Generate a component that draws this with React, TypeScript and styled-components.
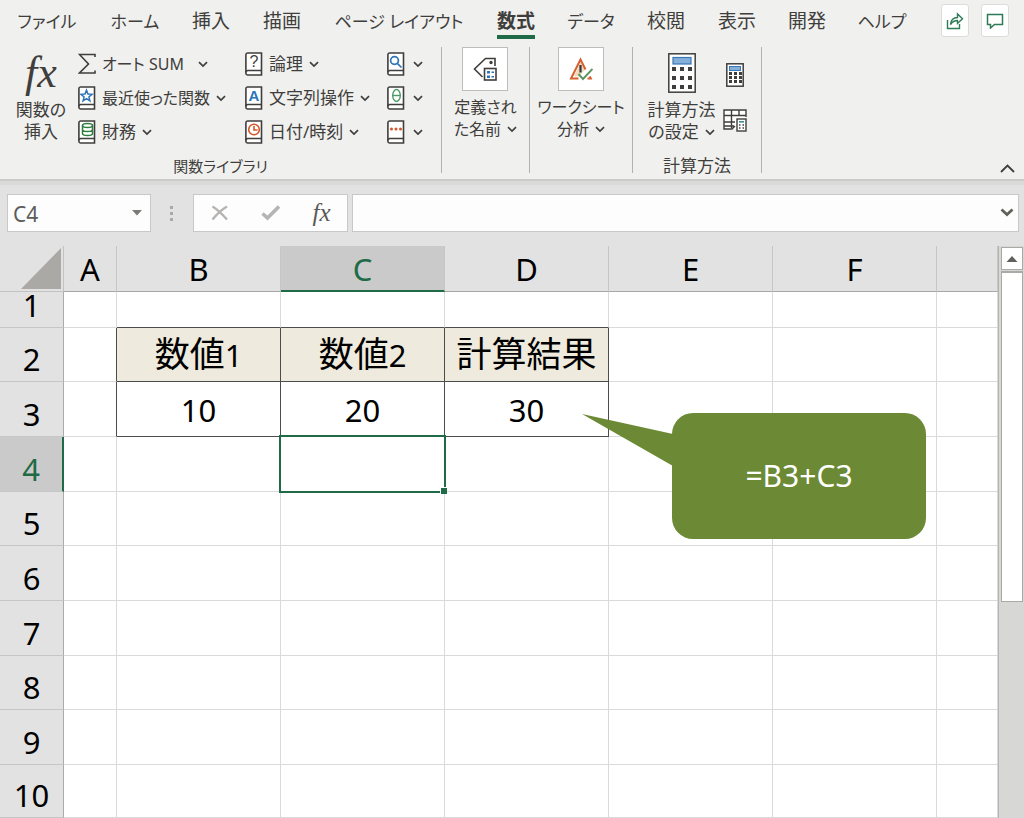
import React, { ReactNode } from 'react';
import styled, { createGlobalStyle, css } from 'styled-components';

const green = '#1f6b47';
const ink = '#3f3e3c';

const GlobalStyle = createGlobalStyle`
  *, *::before, *::after { box-sizing: border-box; }
  body {
    margin: 0;
    background: #e2e2e2;
    color: ${ink};
    font-family: "Noto Sans", "Noto Sans CJK JP", sans-serif;
  }
  button, input { font: inherit; color: inherit; }
  button { border: 0; padding: 0; background: none; cursor: pointer; }
  svg { display: block; flex: none; }
`;

const Page = styled.div`
  display: flex;
  flex-direction: column;
  min-height: 100vh;
`;

/* ---------- ribbon ---------- */

const Ribbon = styled.header`
  background: #f0f0ee;
  border-bottom: 2px solid #cbcbc9;
  font-feature-settings: "palt";
`;

const TabBar = styled.nav`
  display: flex;
  align-items: flex-start;
  height: 41px;
  padding: 0 15px 0 3px;
`;

const Tab = styled.button<{ $width: number; $active?: boolean; $kana?: boolean }>`
  display: flex;
  flex-direction: column;
  align-items: center;
  width: ${p => p.$width}px;
  padding-top: 8px;
  font-size: ${p => (p.$kana ? 17 : 19)}px;
  line-height: 27px;
  white-space: nowrap;
  font-weight: ${p => (p.$active ? 700 : 400)};
`;

const TabText = styled.span<{ $active?: boolean }>`
  border-bottom: 4px solid ${p => (p.$active ? green : 'transparent')};
`;

const TabActions = styled.div`
  display: flex;
  gap: 12px;
  margin-left: auto;
  padding-top: 4px;
`;

const ActionButton = styled.button`
  display: grid;
  place-items: center;
  width: 28px;
  height: 33px;
  background: #fff;
  border: 1px solid #dcdcda;
  border-radius: 3px;
`;

const RibbonBody = styled.div`
  display: flex;
  padding-top: 6px;
  padding-bottom: 6px;
`;

const Group = styled.section<{ $width: number }>`
  display: flex;
  flex-direction: column;
  width: ${p => p.$width}px;
  height: 126px;
  border-right: 1px solid #b2b2b0;
`;

const GroupBody = styled.div<{ $center?: boolean }>`
  display: flex;
  flex: 1;
  justify-content: ${p => (p.$center ? 'center' : 'flex-start')};
`;

const GroupLabel = styled.h2<{ $compact?: boolean }>`
  margin: 0;
  font-size: ${p => (p.$compact ? 15 : 17)}px;
  font-weight: 400;
  line-height: 14px;
  text-align: center;
`;

const BigButton = styled.button<{ $drop?: number; $compact?: boolean }>`
  display: flex;
  flex-direction: column;
  align-items: center;
  align-self: flex-start;
  padding-top: ${p => p.$drop ?? 0}px;
  font-size: ${p => (p.$compact ? 16 : 17)}px;
  line-height: 22px;
  white-space: nowrap;
`;

const BigIcon = styled.span<{ $height: number }>`
  display: grid;
  place-items: start center;
  height: ${p => p.$height}px;
`;

const Tile = styled.span`
  display: grid;
  place-items: center;
  width: 46px;
  height: 44px;
  margin-bottom: 5px;
  background: #fff;
  border: 1px solid #bdbdbb;
`;

const Line = styled.span`
  display: flex;
  align-items: center;
  gap: 6px;
`;

const FxMark = styled.span<{ $size: number }>`
  font-family: "Liberation Serif", serif;
  font-style: italic;
  font-size: ${p => p.$size}px;
  line-height: 1;
`;

const Library = styled.div`
  display: grid;
  grid-template-columns: 64px 167px 142px auto;
  padding-left: 14px;
`;

const InsertCell = styled.div`
  width: 54px;
  display: flex;
  justify-content: center;
`;

const CommandColumn = styled.div`
  display: flex;
  flex-direction: column;
  align-items: flex-start;
`;

const Command = styled.button<{ $wide?: boolean; $compact?: boolean }>`
  display: flex;
  align-items: center;
  gap: 6px;
  height: 34px;
  font-size: ${p => (p.$compact ? 16 : 17)}px;
  line-height: 24px;
  white-space: nowrap;
  & > span { padding-right: ${p => (p.$wide ? 8 : 0)}px; }
`;

const IconCommand = styled(Command)`
  gap: 8px;
`;

const SideButtons = styled.div`
  display: flex;
  flex-direction: column;
  align-items: center;
  gap: 22px;
  padding-top: 16px;
  margin-left: 7px;
`;

const Collapse = styled.button`
  align-self: flex-end;
  margin-left: auto;
  padding-right: 9px;
`;

/* ---------- formula bar ---------- */

const FormulaBar = styled.div`
  display: flex;
  align-items: center;
  height: 65px;
  padding: 0 5px 6px 7px;
  border-top: 4px solid #dadad8;
`;

const box = css`
  height: 38px;
  background: #fdfdfd;
  border: 1px solid #c8c8c6;
`;

const NameBox = styled.div`
  ${box}
  display: flex;
  align-items: center;
  width: 144px;
  padding: 0 7px 0 5px;
`;

const NameInput = styled.input`
  flex: 1;
  min-width: 0;
  padding: 3px 0 0;
  border: 0;
  background: none;
  font-size: 21px;
  line-height: 30px;
  color: #5c5c5a;
  outline: none;
`;

const Dots = styled.span`
  display: grid;
  place-items: center;
  width: 42px;
`;

const EntryButtons = styled.div`
  ${box}
  display: grid;
  grid-template-columns: repeat(3, 1fr);
  place-items: center;
  width: 155px;
  margin-right: 4px;
  color: #5a5957;
`;

const FormulaBox = styled.div`
  ${box}
  display: flex;
  flex: 1;
  align-items: center;
  padding-right: 4px;
`;

const FormulaInput = styled.input`
  flex: 1;
  min-width: 0;
  padding: 0 8px;
  border: 0;
  background: none;
  font-size: 21px;
  outline: none;
`;

/* ---------- sheet ---------- */

const Sheet = styled.main`
  position: relative;
  display: flex;
  flex: 1;
`;

const Grid = styled.table`
  flex: 1;
  width: 100%;
  align-self: flex-start;
  table-layout: fixed;
  border-spacing: 0;
  background: #fff;
  color: #000;
  font-size: 31px;
  line-height: 26px;
  text-align: center;
`;

const Col = styled.col<{ $width?: number }>`
  width: ${p => (p.$width ? `${p.$width}px` : 'auto')};
`;

const Row = styled.tr<{ $height: number }>`
  height: ${p => p.$height}px;
`;

const Heading = styled.th<{ $on?: boolean; $side?: boolean }>`
  padding: 0 0 9px;
  vertical-align: bottom;
  font-weight: 400;
  background: ${p => (p.$on ? '#cacaca' : '#e2e2e2')};
  color: ${p => (p.$on ? green : '#000')};
  border-right: 1px solid #c6c6c6;
  border-bottom: 1px solid #c6c6c6;
  ${p => p.$side && css`border-right-color: #ababab;`}
  ${p => !p.$side && css`border-bottom-color: #a8a8a8;`}
  ${p => p.$on && p.$side && css`border-right: 2px solid ${green};`}
  ${p => p.$on && !p.$side && css`border-bottom: 2px solid ${green}; padding-bottom: 8px;`}
`;

const Corner = styled.th`
  padding: 0 2px 2px 0;
  vertical-align: bottom;
  background: #e2e2e2;
  border-right: 1px solid #c2c2c2;
  border-bottom: 1px solid #c2c2c2;
  & > svg { margin-left: auto; }
`;

const Cell = styled.td<{ $fill?: boolean; $right?: boolean; $bottom?: boolean }>`
  padding: 0 0 13px;
  vertical-align: bottom;
  white-space: nowrap;
  background: ${p => (p.$fill ? '#eeeadd' : '#fff')};
  border-right: 1px solid ${p => (p.$right ? '#4c4c4c' : '#dadada')};
  border-bottom: 1px solid ${p => (p.$bottom ? '#4c4c4c' : '#dadada')};
`;

const ActiveCell = styled(Cell)`
  position: relative;
  z-index: 1;
`;

const Kanji = styled.span`
  font-size: 35px;
`;

const Selection = styled.div`
  position: absolute;
  inset: -2px;
  border: 2px solid ${green};
  &::after {
    content: "";
    position: absolute;
    right: -3px;
    bottom: -3px;
    width: 7px;
    height: 7px;
    background: ${green};
    border-top: 1px solid #fff;
    border-left: 1px solid #fff;
  }
`;

const Callout = styled.aside`
  position: absolute;
  z-index: 2;
  top: 167px;
  left: 672px;
  display: grid;
  place-items: center;
  width: 254px;
  height: 126px;
  border-radius: 21px;
  background: #6c8a35;
  color: #fff;
  font-size: 30px;
  line-height: 40px;
`;

const Tail = styled.svg`
  position: absolute;
  top: 1px;
  right: 253px;
`;

const ScrollBar = styled.div`
  display: flex;
  flex-direction: column;
  gap: 1px;
  width: 26px;
  padding: 1px 1px 0 2px;
  background: #d7d7d5;
  border-left: 1px solid #b4b4b2;
`;

const ScrollButton = styled.button`
  display: grid;
  place-items: center;
  height: 23px;
  background: #fff;
  border: 1px solid #a9a9a5;
`;

const Thumb = styled.div`
  height: 58%;
  background: #fff;
  border: 1px solid #a9a9a5;
  border-top-width: 2px;
`;

/* ---------- icons ---------- */

const Chevron = () => (
  <svg width="10" height="7" viewBox="0 0 10 7" fill="none" stroke={ink} strokeWidth="1.7">
    <path d="M1 1.200l4 3.800 4-3.800" />
  </svg>
);

const Book = ({ children }: { children: ReactNode }) => (
  <svg width="18" height="24" viewBox="0 0 18 24" fill="none">
    <path d="M2.500 1h14v22h-14A1.700 1.700 0 0 1 .9 21.300V2.700A1.700 1.700 0 0 1 2.500 1z" fill="#fff" stroke={ink} strokeWidth="1.600" />
    <path d="M1 20.300a1.700 1.700 0 0 1 1.700-1.700H16.500" stroke={ink} strokeWidth="1.500" />
    {children}
  </svg>
);

const Sigma = () => (
  <svg width="18" height="22" viewBox="0 0 18 22" fill="none" stroke={ink} strokeWidth="1.600">
    <path d="M17 4V1.500H1.500L10.500 11 1.500 20H17V17.500" />
  </svg>
);

const StarBook = () => (
  <Book>
    <path d="M8.500 4.200l1.500 3.900 4 .2-3.100 2.600 1 4-3.400-2.200-3.400 2.200 1-4L3 8.300l4-.2z" stroke="#2b74b8" strokeWidth="1.500" />
  </Book>
);

const CoinsBook = () => (
  <Book>
    <g stroke="#2c7d3e" strokeWidth="1.500">
      <ellipse cx="9.500" cy="5.500" rx="5" ry="2" />
      <path d="M4.500 5.500v8c0 1.200 2.200 2 5 2s5-.8 5-2v-8M4.500 9.500c0 1.200 2.200 2 5 2s5-.8 5-2" />
    </g>
  </Book>
);

const LetterBook = ({ glyph, color, bold, size = 16 }: { glyph: string; color: string; bold?: boolean; size?: number }) => (
  <Book>
    <text
      x="9"
      y="15"
      textAnchor="middle"
      fontFamily="Liberation Sans, sans-serif"
      fontSize={size}
      fontWeight={bold ? 700 : 400}
      fill={color}
    >
      {glyph}
    </text>
  </Book>
);

const ThetaBook = () => (
  <Book>
    <g stroke="#4f9a68" strokeWidth="1.400">
      <ellipse cx="9.500" cy="9.500" rx="3.800" ry="6" />
      <path d="M5.700 9.500h7.600" />
    </g>
  </Book>
);

const ClockBook = () => (
  <Book>
    <g stroke="#d4562a" strokeWidth="1.600">
      <circle cx="9" cy="9.500" r="5.300" />
      <path d="M9 6v4h3.500" />
    </g>
  </Book>
);

const SearchBook = () => (
  <Book>
    <g stroke="#2b74b8" strokeWidth="1.700">
      <circle cx="7.500" cy="8.500" r="3.900" />
      <path d="M10.300 11.300l4.200 4.200" />
    </g>
  </Book>
);

const MoreBook = () => (
  <Book>
    <g fill="#d4562a">
      <circle cx="4.500" cy="9" r="1.500" />
      <circle cx="9" cy="9" r="1.500" />
      <circle cx="13.500" cy="9" r="1.500" />
    </g>
  </Book>
);

const TagIcon = () => (
  <svg width="24" height="24" viewBox="0 0 24 24" fill="none" stroke={ink} strokeWidth="1.600">
    <path d="M22 9V1.500h-9.500L1.500 12l8 8" />
    <circle cx="18" cy="5.500" r=".9" fill={ink} />
    <rect x="11.500" y="11.500" width="11.500" height="11.500" fill="#fff" />
    <path d="M14 14h3v2.500h-3zM14 18.500h3v2.500h-3z" fill="#2b74b8" stroke="none" />
    <path d="M18.500 15.300h2.500M18.500 19.700h2.500" stroke="#2b74b8" />
  </svg>
);

const WarningIcon = () => (
  <svg width="24" height="24" viewBox="0 0 24 24" fill="none">
    <path d="M11.500 5L5 19.500h5l6-7z" fill="#f3d9b6" />
    <path d="M9.500 21.500H2L11.500 2.500l5 10M18.500 21.500h3.300l-1-2.200" stroke="#d8602f" strokeWidth="2" />
    <path d="M11.500 8v7.500" stroke="#33373d" strokeWidth="2.200" />
    <path d="M9.500 17l4.500 5 9.500-10" stroke="#5b9460" strokeWidth="1.900" />
  </svg>
);

const squares = (x0: number, y0: number, dx: number, dy: number, s: number) =>
  [0, 1, 2].flatMap(r =>
    [0, 1, 2].map(c => (
      <rect key={`${r}${c}`} x={x0 + c * dx} y={y0 + r * dy} width={s} height={s} fill={ink} />
    ))
  );

const CalculatorIcon = () => (
  <svg width="28" height="40" viewBox="0 0 28 40">
    <rect x=".8" y=".8" width="26.400" height="38.400" fill="#fff" stroke={ink} strokeWidth="1.500" />
    <rect x="5" y="4.500" width="18" height="6.500" fill="#84afd8" stroke="#3a77b5" strokeWidth="1.200" />
    {squares(4, 14, 8, 9, 4)}
  </svg>
);

const SmallCalculator = () => (
  <svg width="18" height="24" viewBox="0 0 18 24">
    <rect x=".8" y=".8" width="16.400" height="22.400" fill="#fff" stroke={ink} strokeWidth="1.500" />
    <rect x="3.500" y="3.500" width="11" height="4" fill="#84afd8" stroke="#3a77b5" />
    {squares(3, 9, 5, 4, 3)}
  </svg>
);

const SheetCalculator = () => (
  <svg width="24" height="23" viewBox="0 0 24 23" fill="none" stroke={ink} strokeWidth="1.400">
    <path d="M1 1h22v19H1z" fill="#fff" stroke="none" />
    <path d="M23 8V1H1v19h8l3-3M1 6.500h22M1 13h11M1 17h10M8.500 1v18M16 1v6" />
    <rect x="14" y="10" width="9" height="12" fill="#fff" />
    <path d="M16 12.800h5" stroke="#3b8a98" strokeWidth="1.600" />
    <path d="M16 16h1.500M19.500 16H21M16 19h1.500M19.500 19H21" strokeWidth="1.500" />
  </svg>
);

const ShareIcon = () => (
  <svg width="18" height="18" viewBox="0 0 18 18" fill="none" stroke="#2f7a57" strokeWidth="1.400">
    <path d="M1.500 8v8.500h12V12" />
    <path d="M4.500 12.500c.5-5 3-7 7-7V2l5 4.800-5 4.700V8.500c-3 0-5 1-7 4z" />
  </svg>
);

const CommentIcon = () => (
  <svg width="18" height="16" viewBox="0 0 18 16" fill="none" stroke="#2f7a57" strokeWidth="1.500">
    <path d="M1.500 1.500h15v10H8.500L4.500 15v-3.500h-3z" />
  </svg>
);

/* ---------- data ---------- */

const tabs: { label: string; width: number; active?: boolean; kana?: boolean }[] = [
  { label: 'ファイル', width: 88, kana: true },
  { label: 'ホーム', width: 88, kana: true },
  { label: '挿入', width: 64 },
  { label: '描画', width: 78 },
  { label: 'ページ レイアウト', width: 156, kana: true },
  { label: '数式', width: 78, active: true },
  { label: 'データ', width: 72, kana: true },
  { label: '校閲', width: 78 },
  { label: '表示', width: 64 },
  { label: '開発', width: 76 },
  { label: 'ヘルプ', width: 74, kana: true },
];

const columns = ['A', 'B', 'C', 'D', 'E', 'F', ''];
const widths = [53, 164, 164, 164, 164, 164, undefined];
const rowHeights = [36, 54, 55, 55, 54, 55, 55, 54, 55, 53];

const values: Record<string, ReactNode> = {
  B2: <><Kanji>数値</Kanji>1</>,
  C2: <><Kanji>数値</Kanji>2</>,
  D2: <Kanji>計算結果</Kanji>,
  B3: '10',
  C3: '20',
  D3: '30',
};

const inTable = (c: number) => c >= 1 && c <= 3;

export default function App() {
  return (
    <Page>
      <GlobalStyle />
      <Ribbon>
        <TabBar>
          {tabs.map(t => (
            <Tab key={t.label} $width={t.width} $active={t.active} $kana={t.kana}>
              <TabText $active={t.active}>{t.label}</TabText>
            </Tab>
          ))}
          <TabActions>
            <ActionButton aria-label="共有"><ShareIcon /></ActionButton>
            <ActionButton aria-label="コメント"><CommentIcon /></ActionButton>
          </TabActions>
        </TabBar>
        <RibbonBody>
          <Group $width={442}>
            <GroupBody>
              <Library>
                <InsertCell>
                  <BigButton $drop={4}>
                    <BigIcon $height={48}><FxMark $size={44}>fx</FxMark></BigIcon>
                    <Line>関数の</Line>
                    <Line>挿入</Line>
                  </BigButton>
                </InsertCell>
                <CommandColumn>
                  <Command $wide $compact><Sigma /><span>オート SUM</span><Chevron /></Command>
                  <Command $compact><StarBook /><span>最近使った関数</span><Chevron /></Command>
                  <Command><CoinsBook /><span>財務</span><Chevron /></Command>
                </CommandColumn>
                <CommandColumn>
                  <Command><LetterBook glyph="?" color={ink} size={16} /><span>論理</span><Chevron /></Command>
                  <Command><LetterBook glyph="A" color="#2b74b8" bold size={15} /><span>文字列操作</span><Chevron /></Command>
                  <Command><ClockBook /><span>日付/時刻</span><Chevron /></Command>
                </CommandColumn>
                <CommandColumn>
                  <IconCommand aria-label="検索/行列"><SearchBook /><Chevron /></IconCommand>
                  <IconCommand aria-label="数学/三角"><ThetaBook /><Chevron /></IconCommand>
                  <IconCommand aria-label="その他の関数"><MoreBook /><Chevron /></IconCommand>
                </CommandColumn>
              </Library>
            </GroupBody>
            <GroupLabel $compact>関数ライブラリ</GroupLabel>
          </Group>
          <Group $width={88}>
            <GroupBody $center>
              <BigButton $compact>
                <Tile><TagIcon /></Tile>
                <Line>定義され</Line>
                <Line>た名前<Chevron /></Line>
              </BigButton>
            </GroupBody>
          </Group>
          <Group $width={103}>
            <GroupBody $center>
              <BigButton $compact>
                <Tile><WarningIcon /></Tile>
                <Line>ワークシート</Line>
                <Line>分析<Chevron /></Line>
              </BigButton>
            </GroupBody>
          </Group>
          <Group $width={129}>
            <GroupBody $center>
              <BigButton $drop={6}>
                <BigIcon $height={46}><CalculatorIcon /></BigIcon>
                <Line>計算方法</Line>
                <Line>の設定<Chevron /></Line>
              </BigButton>
              <SideButtons>
                <button aria-label="再計算実行"><SmallCalculator /></button>
                <button aria-label="シート再計算"><SheetCalculator /></button>
              </SideButtons>
            </GroupBody>
            <GroupLabel>計算方法</GroupLabel>
          </Group>
          <Collapse aria-label="リボンを折りたたむ">
            <svg width="15" height="9" viewBox="0 0 15 9" fill="none" stroke={ink} strokeWidth="1.800">
              <path d="M1 8l6.500-6.500L14 8" />
            </svg>
          </Collapse>
        </RibbonBody>
      </Ribbon>

      <FormulaBar>
        <NameBox>
          <NameInput aria-label="名前ボックス" defaultValue="C4" />
          <button aria-label="名前の一覧">
            <svg width="12" height="6" viewBox="0 0 12 6"><path d="M1 0h10L6 5.500z" fill="#7b7a76" /></svg>
          </button>
        </NameBox>
        <Dots>
          <svg width="4" height="16" viewBox="0 0 4 16" fill="#aaa9a7">
            <rect y="1" width="3" height="3" /><rect y="7" width="3" height="3" /><rect y="13" width="3" height="3" />
          </svg>
        </Dots>
        <EntryButtons>
          <button aria-label="キャンセル">
            <svg width="18" height="16" viewBox="0 0 18 16" fill="none" stroke="#b5b4b2" strokeWidth="2.400">
              <path d="M1.500 1.500C6 4 11 9 16 14.500M16 1.500C10 5 6 9 1.500 14.500" />
            </svg>
          </button>
          <button aria-label="入力">
            <svg width="20" height="16" viewBox="0 0 20 16" fill="none" stroke="#b5b4b2" strokeWidth="3.600">
              <path d="M1.500 8.500l5 4.500L18 1.500" />
            </svg>
          </button>
          <button aria-label="関数の挿入"><FxMark $size={25}>fx</FxMark></button>
        </EntryButtons>
        <FormulaBox>
          <FormulaInput aria-label="数式バー" />
          <button aria-label="数式バーの展開">
            <svg width="14" height="9" viewBox="0 0 14 9" fill="none" stroke="#62605c" strokeWidth="2.800">
              <path d="M1.500 1.500L7 6.500l5.500-5" />
            </svg>
          </button>
        </FormulaBox>
      </FormulaBar>

      <Sheet>
        <Grid>
          <colgroup>
            <Col $width={64} />
            {widths.map((w, i) => <Col key={i} $width={w} />)}
          </colgroup>
          <thead>
            <Row $height={46}>
              <Corner>
                <svg width="40" height="41" viewBox="0 0 40 41"><path d="M40 0v41H0z" fill="#aaa9a5" /></svg>
              </Corner>
              {columns.map((c, i) => <Heading key={i} scope="col" $on={c === 'C'}>{c}</Heading>)}
            </Row>
          </thead>
          <tbody>
            {rowHeights.map((h, r) => {
              const n = r + 1;
              const dataRow = n === 2 || n === 3;
              return (
                <Row key={n} $height={h}>
                  <Heading scope="row" $side $on={n === 4}>{n}</Heading>
                  {columns.map((name, c) =>
                    `${name}${n}` === 'C4' ? (
                      <ActiveCell key={c}><Selection /></ActiveCell>
                    ) : (
                      <Cell
                        key={c}
                        $fill={n === 2 && inTable(c)}
                        $right={dataRow && c <= 3}
                        $bottom={n <= 3 && inTable(c)}
                      >
                        {values[`${name}${n}`]}
                      </Cell>
                    )
                  )}
                </Row>
              );
            })}
          </tbody>
        </Grid>
        <ScrollBar>
          <ScrollButton aria-label="上へスクロール">
            <svg width="12" height="6" viewBox="0 0 12 6"><path d="M6 0l5.500 6H.5z" fill="#62605c" /></svg>
          </ScrollButton>
          <Thumb />
        </ScrollBar>
        <Callout>
          <Tail width="91" height="52" viewBox="0 0 91 52"><path d="M0 0l91 20v32z" fill="#6c8a35" /></Tail>
          =B3+C3
        </Callout>
      </Sheet>
    </Page>
  );
}
